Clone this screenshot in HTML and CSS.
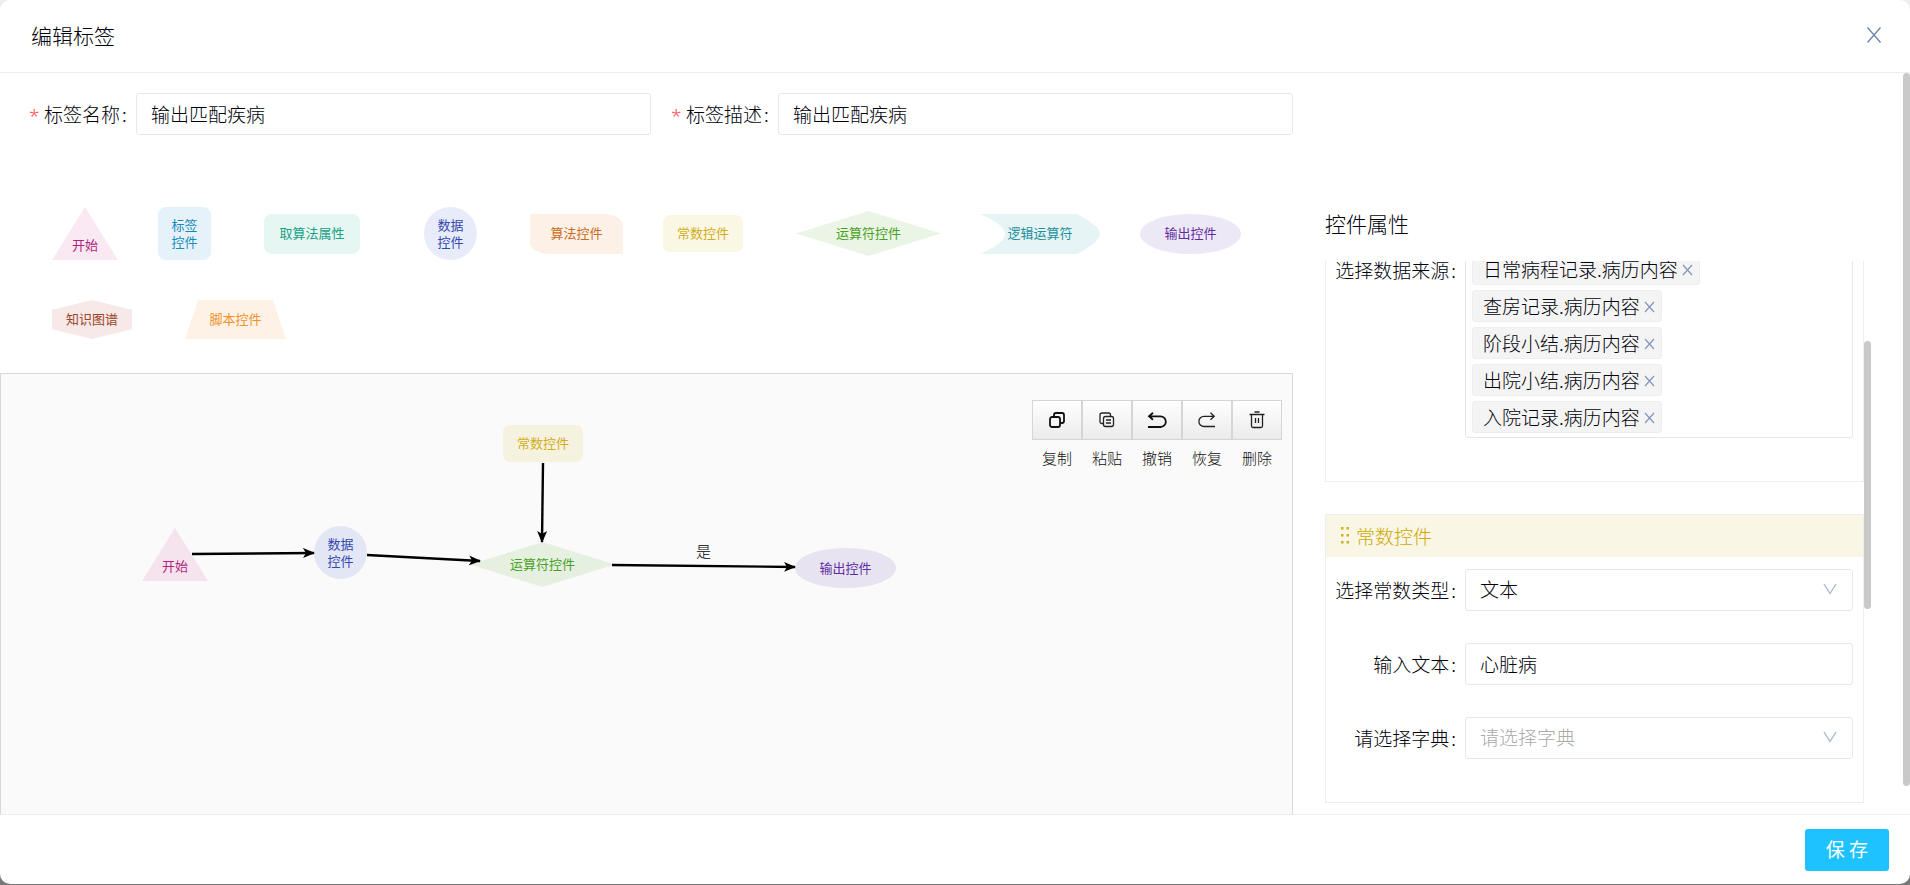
FILE: index.html
```html
<!DOCTYPE html>
<html lang="zh-CN">
<head>
<meta charset="utf-8">
<title>编辑标签</title>
<link rel="stylesheet" href="styles.css">
</head>
<body>
<div class="modal" role="dialog" aria-labelledby="dialog-title">
  <header class="modal-header">
    <h1 class="title" id="dialog-title">编辑标签</h1>
    <button class="close" type="button" aria-label="关闭"><svg width="16" height="18" viewBox="0 0 16 18"><path d="M1.5 1.5L14.5 16.5M14.5 1.5L1.5 16.5"/></svg></button>
  </header>

  <main class="modal-body">
    <div class="left">
      <form class="base-form">
        <div class="base-field">
          <label class="base-label" for="tag-name"><span class="required">*</span>标签名称<span class="colon">:</span></label>
          <input class="control" id="tag-name" type="text" value="输出匹配疾病">
        </div>
        <div class="base-field">
          <label class="base-label" for="tag-desc"><span class="required">*</span>标签描述<span class="colon">:</span></label>
          <input class="control" id="tag-desc" type="text" value="输出匹配疾病">
        </div>
      </form>

      <div class="palette">
        <div class="palette-row">
          <div class="shape triangle pink">开始</div>
          <div class="shape square blue">标签<br>控件</div>
          <div class="shape round-rect teal">取算法属性</div>
          <div class="shape circle indigo">数据<br>控件</div>
          <div class="shape leaf orange">算法控件</div>
          <div class="shape small-rect yellow">常数控件</div>
          <div class="shape diamond green">运算符控件</div>
          <div class="shape arrow cyan"><svg class="shape-bg" viewBox="0 0 120 40" preserveAspectRatio="none"><path d="M0 0H97Q120 12 120 20T97 40H0Q25 29 25 20T0 0Z"/></svg><span class="shape-text">逻辑运算符</span></div>
          <div class="shape ellipse purple">输出控件</div>
        </div>
        <div class="palette-row">
          <div class="shape hexagon brown">知识图谱</div>
          <div class="shape trapezoid amber">脚本控件</div>
        </div>
      </div>

      <div class="canvas">
        <div class="node node-start shape triangle pink">开始</div>
        <div class="node node-data shape circle indigo">数据<br>控件</div>
        <div class="node node-const shape small-rect yellow">常数控件</div>
        <div class="node node-op shape diamond green">运算符控件</div>
        <div class="node node-out shape ellipse purple">输出控件</div>
        <span class="node node-yes">是</span>
        <svg class="edges" width="1000" height="300">
          <defs>
            <marker id="tip" viewBox="0 0 12 12" refX="11" refY="6" markerWidth="12" markerHeight="12" markerUnits="userSpaceOnUse" orient="auto"><path d="M0 1L12 6L0 11L3 6Z"/></marker>
          </defs>
          <path class="edge" d="M191 180L313 179"/>
          <path class="edge" d="M366 181L479 187"/>
          <path class="edge" d="M542 89L541 168"/>
          <path class="edge" d="M611 191L794 193"/>
        </svg>

        <div class="toolbar">
          <div class="tool"><button class="tool-btn" type="button" aria-labelledby="l1"><svg width="16" height="16" viewBox="0 0 16 16"><rect class="thick" x="1" y="5" width="10" height="10" rx="2"/><path class="thick" d="M5 5V3Q5 1 7 1H13Q15 1 15 3V9Q15 11 13 11H11"/></svg></button><span class="tool-label" id="l1">复制</span></div>
          <div class="tool"><button class="tool-btn" type="button" aria-labelledby="l2"><svg width="16" height="16" viewBox="0 0 16 16"><rect x="4.500" y="4.500" width="10" height="10" rx="2"/><path d="M4.500 11.500H3Q1 11.500 1 9.500V3Q1 1 3 1H9.500Q11.500 1 11.500 3V4.500M7 8H12M7 11H12"/></svg></button><span class="tool-label" id="l2">粘贴</span></div>
          <div class="tool"><button class="tool-btn" type="button" aria-labelledby="l3"><svg width="20" height="16" viewBox="0 0 20 16"><path class="thick" d="M1 15H13.500A5.300 5.300 0 0 0 13.500 4.300H2M6 .8L2 4.300L6 7.800"/></svg></button><span class="tool-label" id="l3">撤销</span></div>
          <div class="tool"><button class="tool-btn" type="button" aria-labelledby="l4"><svg width="18" height="16" viewBox="0 0 18 16"><path d="M17 14.500H6A5.100 5.100 0 0 1 6 4.300H16M12.500 .8L16.200 4.300L12.500 7.800"/></svg></button><span class="tool-label" id="l4">恢复</span></div>
          <div class="tool"><button class="tool-btn" type="button" aria-labelledby="l5"><svg width="16" height="18" viewBox="0 0 16 18"><path d="M.5 3.500H15.500M5.500 1H10.500M2.500 3.500V15Q2.500 16.500 4 16.500H12Q13.500 16.500 13.500 15V3.500M6.500 7V12M9.500 7V12"/></svg></button><span class="tool-label" id="l5">删除</span></div>
        </div>
      </div>
    </div>

    <aside class="right">
      <h2 class="title props-title">控件属性</h2>
      <div class="props-scroll">
        <section class="card card-source">
          <div class="row row-source">
            <span class="row-label" id="src-label">选择数据来源<span class="colon">:</span></span>
            <div class="multi" role="listbox" aria-labelledby="src-label">
              <span class="tag">日常病程记录.病历内容<button class="tag-x" type="button" aria-label="移除"><svg width="11" height="12" viewBox="0 0 11 12"><path d="M1 1L10 11M10 1L1 11"/></svg></button></span>
              <span class="tag">查房记录.病历内容<button class="tag-x" type="button" aria-label="移除"><svg width="11" height="12" viewBox="0 0 11 12"><path d="M1 1L10 11M10 1L1 11"/></svg></button></span>
              <span class="tag">阶段小结.病历内容<button class="tag-x" type="button" aria-label="移除"><svg width="11" height="12" viewBox="0 0 11 12"><path d="M1 1L10 11M10 1L1 11"/></svg></button></span>
              <span class="tag">出院小结.病历内容<button class="tag-x" type="button" aria-label="移除"><svg width="11" height="12" viewBox="0 0 11 12"><path d="M1 1L10 11M10 1L1 11"/></svg></button></span>
              <span class="tag">入院记录.病历内容<button class="tag-x" type="button" aria-label="移除"><svg width="11" height="12" viewBox="0 0 11 12"><path d="M1 1L10 11M10 1L1 11"/></svg></button></span>
            </div>
          </div>
        </section>

        <section class="card">
          <h3 class="card-head"><svg width="8" height="17" viewBox="0 0 8 17"><path d="M0 0h2.500v2.500H0zM5.500 0H8v2.500H5.500zM0 7h2.500v2.500H0zM5.500 7H8v2.500H5.500zM0 14h2.500v2.500H0zM5.500 14H8v2.500H5.500z"/></svg>常数控件</h3>
          <div class="card-rows">
            <div class="row">
              <label class="row-label" for="const-type">选择常数类型<span class="colon">:</span></label>
              <div class="select-wrap">
                <select class="control" id="const-type"><option>文本</option></select>
                <svg class="chevron" width="14" height="12" viewBox="0 0 14 12"><path d="M1 1L7 10.500L13 1"/></svg>
              </div>
            </div>
            <div class="row">
              <label class="row-label" for="const-text">输入文本<span class="colon">:</span></label>
              <input class="control" id="const-text" type="text" value="心脏病">
            </div>
            <div class="row">
              <label class="row-label" for="dict">请选择字典<span class="colon">:</span></label>
              <div class="select-wrap">
                <select class="control placeholder" id="dict"><option>请选择字典</option></select>
                <svg class="chevron" width="14" height="12" viewBox="0 0 14 12"><path d="M1 1L7 10.500L13 1"/></svg>
              </div>
            </div>
          </div>
        </section>
      </div>
      <div class="inner-bar"></div>
    </aside>
    <div class="outer-bar"></div>
  </main>

  <footer class="modal-footer">
    <button class="save" type="button">保 存</button>
  </footer>
</div>
</body>
</html>
```
FILE: styles.css
```css
* { box-sizing: border-box; }

body {
  margin: 0;
  height: 100vh;
  padding-bottom: 1px;
  overflow: hidden;
  background: linear-gradient(#eee 50%, #777 50%);
  color: #000008;
  font-family: "Noto Sans CJK SC", sans-serif;
  font-size: 19px;
  font-weight: 300;
  line-height: 28px;
}

button, input, select { font: inherit; color: inherit; }
button { cursor: pointer; }
h1, h2, h3 { margin: 0; font-weight: 300; }
svg { display: block; fill: none; }

.modal {
  display: flex;
  flex-direction: column;
  height: 100%;
  background: #fff;
  border-radius: 10px;
  overflow: hidden;
}

.modal-header {
  display: flex;
  flex: none;
  align-items: center;
  justify-content: space-between;
  height: 73px;
  padding: 0 25px 2px 31px;
  border-bottom: 1px solid #eee;
}

.title { font-size: 21px; }

.close {
  padding: 3px;
  border: 0;
  background: none;
  stroke: #6f86ad;
  stroke-width: 1.4;
}

.modal-body {
  position: relative;
  display: flex;
  flex: 1;
  min-height: 0;
}

.left {
  display: flex;
  flex: 0 0 67.7%;
  flex-direction: column;
}

.base-form {
  display: flex;
  gap: 20px;
  padding: 20px 0 0 29px;
}

.base-field {
  display: flex;
  flex: 1;
  align-items: center;
}

.base-label {
  display: flex;
  flex: none;
  width: 107px;
  padding-bottom: 1px;
}

.required {
  width: 15px;
  padding-top: 4px;
  color: #ff4d4f;
  font-family: "Noto Sans", sans-serif;
  line-height: 24px;
}

.colon { margin-left: 2px; }

.control {
  display: block;
  flex: 1;
  width: 100%;
  min-width: 0;
  height: 42px;
  padding: 0 14px 2px;
  border: 1px solid #e4e9ed;
  border-radius: 3px;
  background: #fff;
  appearance: none;
}

.placeholder { color: #aaa; }

/* Palette */

.palette {
  display: flex;
  flex-direction: column;
  gap: 40px;
  padding: 72px 0 34px 52px;
}

.palette-row {
  display: flex;
  align-items: center;
}

.shape {
  position: relative;
  display: flex;
  flex: none;
  align-items: center;
  justify-content: center;
  padding-bottom: 2px;
  font-size: 13px;
  font-weight: 400;
  line-height: 17px;
  text-align: center;
}

.shape-bg {
  position: absolute;
  inset: 0;
  width: 100%;
  height: 100%;
}

.shape-text { position: relative; }

.triangle {
  width: 66px;
  height: 53px;
  padding-top: 24px;
  clip-path: polygon(50% 0, 100% 100%, 0 100%);
}

.square { width: 53px; height: 53px; border-radius: 8px; }
.round-rect { width: 96px; height: 40px; border-radius: 8px; }
.circle { width: 53px; height: 53px; border-radius: 50%; }
.leaf { width: 93px; height: 40px; border-radius: 0 20px 0 20px / 0 11px 0 11px; }
.small-rect { width: 80px; height: 37px; border-radius: 7px; }
.diamond { width: 145px; height: 45px; clip-path: polygon(50% 0, 100% 50%, 50% 100%, 0 50%); }
.arrow { width: 120px; height: 40px; }
.ellipse { width: 101px; height: 40px; border-radius: 50%; }
.hexagon { width: 80px; height: 39px; clip-path: polygon(50% 0, 100% 25%, 100% 75%, 50% 100%, 0 75%, 0 25%); }
.trapezoid { width: 101px; height: 39px; clip-path: polygon(13% 0, 87% 0, 100% 100%, 0 100%); }

.palette .square { margin-left: 40px; }
.palette .round-rect { margin-left: 53px; }
.palette .circle { margin-left: 64px; }
.palette .leaf { margin-left: 53px; }
.palette .small-rect { margin-left: 40px; }
.palette .diamond { margin-left: 53px; }
.palette .arrow { margin-left: 39px; }
.palette .ellipse { margin-left: 40px; }
.palette .trapezoid { margin-left: 53px; }

.pink { background: rgba(204, 34, 136, .1); color: #b0257d; }
.blue { background: #e5f2f9; color: #1a8abb; }
.teal { background: #e6f6f2; color: #18a085; }
.indigo { background: rgba(48, 80, 210, .11); color: #3448b0; }
.orange { background: #fcf0e7; color: #cb6a20; }
.yellow { background: rgba(208, 180, 20, .11); color: #d2ae1a; }
.green { background: rgba(70, 160, 30, .11); color: #48a01f; }
.cyan { color: #208f9a; }
.cyan .shape-bg { fill: #e7f4f6; }
.purple { background: rgba(90, 50, 170, .11); color: #5d2ba2; }
.brown { background: #f6e9e7; color: #9c4528; }
.amber { background: #fef2e6; color: #f0912c; }

/* Flow canvas */

.canvas {
  position: relative;
  flex: 1;
  min-height: 0;
  border: 1px solid #d9d9d9;
  border-bottom: 0;
  background: #fafafa;
  overflow: hidden;
}

.edges { position: absolute; left: 0; top: 0; }
.edges marker path { fill: #000; }

.edge {
  stroke: #000;
  stroke-width: 2.4;
  marker-end: url(#tip);
}

.node { position: absolute; }
.node-start { left: 141px; top: 154px; }
.node-data { left: 313px; top: 152px; }
.node-const { left: 502px; top: 51px; }
.node-op { left: 469px; top: 168px; }
.node-out { left: 794px; top: 174px; }
.node-yes {
  left: 695px;
  top: 166px;
  font-size: 15px;
  line-height: 22px;
}

.toolbar {
  position: absolute;
  top: 26px;
  right: 10px;
  display: flex;
}

.tool {
  display: flex;
  flex-direction: column;
  align-items: center;
  gap: 6px;
  width: 50px;
}

.tool-btn {
  display: flex;
  align-items: center;
  justify-content: center;
  width: 50px;
  height: 40px;
  padding: 0;
  border: 1px solid #d5d5d5;
  background: linear-gradient(#fff, #ebebeb);
  stroke: #222;
  stroke-width: 1.3;
}

.thick { stroke: #111; stroke-width: 1.8; }

.tool-label {
  font-size: 15px;
  line-height: 24px;
  color: #111;
}

/* Properties */

.right {
  position: relative;
  display: flex;
  flex: 1;
  flex-direction: column;
  min-width: 0;
  padding: 136px 46px 0 32px;
}

.props-title { line-height: 28px; }

.props-scroll {
  display: flex;
  flex: 1;
  flex-direction: column;
  gap: 32px;
  min-height: 0;
  margin-top: 24px;
  overflow: hidden;
}

.card {
  flex: none;
  border: 1px solid #eee;
}

.card-source {
  border-top: 0;
  padding-bottom: 43px;
}

.row {
  display: flex;
  align-items: center;
  padding-right: 10px;
}

.row-source {
  height: 177px;
  align-items: flex-end;
}

.row-source .row-label {
  align-self: flex-start;
  margin-top: -5px;
}

.row-label {
  display: flex;
  flex: none;
  justify-content: flex-end;
  width: 139px;
  padding: 0 9px 1px 0;
}

.multi {
  display: flex;
  flex: 1;
  flex-direction: column;
  align-items: flex-start;
  gap: 5px;
  padding: 4px 6px 4px;
  border: 1px solid #e2e9ea;
  border-radius: 3px;
}

.tag {
  display: flex;
  align-items: center;
  gap: 4px;
  height: 32px;
  padding: 0 6px 1px 10px;
  border: 1px solid #eee;
  border-radius: 3px;
  background: #f4f4f4;
}

.tag-x {
  padding: 3px 0 0;
  border: 0;
  background: none;
  stroke: #8196bb;
  stroke-width: 1.2;
}

.card-head {
  display: flex;
  align-items: center;
  gap: 7px;
  height: 42px;
  padding: 0 0 1px 15px;
  background: #faf6e6;
  color: #cfa800;
  font-size: 19px;
}

.card-head svg { fill: #d4b11c; }

.card-rows {
  display: flex;
  flex-direction: column;
  gap: 32px;
  padding: 12px 0 43px;
}

.select-wrap {
  position: relative;
  flex: 1;
}

.chevron {
  position: absolute;
  top: 14px;
  right: 16px;
  stroke: #a9b8d0;
  stroke-width: 1.4;
  pointer-events: none;
}

.inner-bar {
  position: absolute;
  top: 268px;
  right: 39px;
  width: 7px;
  height: 268px;
  border-radius: 4px;
  background: #c9c9c9;
}

.outer-bar {
  position: absolute;
  top: 0;
  right: 0;
  width: 7px;
  height: 713px;
  border-radius: 4px;
  background: #c9c9c9;
}

.modal-footer {
  display: flex;
  flex: none;
  align-items: center;
  justify-content: flex-end;
  height: 70px;
  padding-right: 21px;
  padding-top: 1px;
  border-top: 1px solid #eee;
}

.save {
  width: 84px;
  height: 42px;
  padding: 0 0 2px;
  border: 0;
  border-radius: 3px;
  background: #1ec2ff;
  color: #fff;
  font-weight: 400;
}
```
